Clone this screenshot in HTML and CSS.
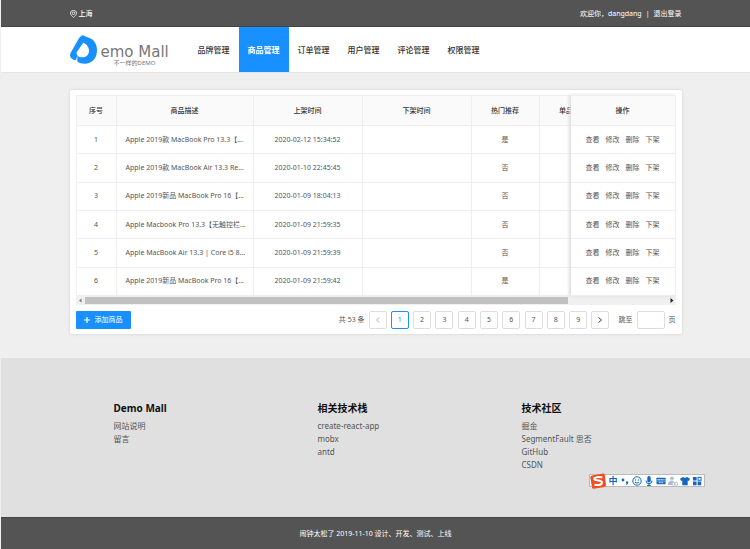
FILE: index.html
```html
<!DOCTYPE html>
<html lang="zh-CN">
<head>
<meta charset="utf-8">
<title>Demo Mall</title>
<link rel="stylesheet" href="styles.css">
</head>
<body>
<header class="topbar">
  <div class="container topbar-inner">
    <span class="city"><svg class="pin" viewBox="0 0 14 16"><path d="M7 15C3.500 11.500 1 9.300 1 6.300a6 5.500 0 0 1 12 0C13 9.300 10.500 11.500 7 15z"/><circle cx="7" cy="6.500" r="2.500"/></svg>上海</span>
    <span class="account">欢迎你，dangdang<span class="divider">|</span><a href="#">退出登录</a></span>
  </div>
</header>
<div class="navbar">
  <div class="container nav-inner">
    <a class="logo" href="#">
      <svg class="logo-mark" viewBox="0 0 81 87"><path fill="#1890ff" fill-rule="evenodd" d="M34 2Q37 0 42 2L56 8C73 13 81 28 81 45C81 70 67 86 43 86Q31 86 22 80V61L18 76C9 74 0 71 0 60Q1 54 5 48L27 10Q30 5 34 2zM40 23L21 50Q18 55 21 59Q24 64 29 66C43 70 57 62 57 47C57 35 49 27 40 23z"/></svg>
      <span class="logo-words"><span class="logo-name">emo Mall</span><span class="logo-sub">不一样的DEMO</span></span>
    </a>
    <nav class="menu">
      <a href="#">品牌管理</a><a class="active" href="#">商品管理</a><a href="#">订单管理</a><a href="#">用户管理</a><a href="#">评论管理</a><a href="#">权限管理</a>
    </nav>
  </div>
</div>
<main class="main">
  <section class="container card">
    <div class="table-wrap">
      <div class="table-scroll">
        <table class="goods">
          <colgroup><col class="c-no"><col class="c-name"><col class="c-time"><col class="c-time"><col class="c-hot"><col class="c-item"></colgroup>
          <thead><tr><th>序号</th><th>商品描述</th><th>上架时间</th><th>下架时间</th><th>热门推荐</th><th>单品推荐</th></tr></thead>
          <tbody>
            <tr><td>1</td><td class="name">Apple 2019款 MacBook Pro 13.3【...</td><td>2020-02-12 15:34:52</td><td></td><td>是</td><td></td></tr>
            <tr><td>2</td><td class="name">Apple 2019款 MacBook Air 13.3 Re...</td><td>2020-01-10 22:45:45</td><td></td><td>否</td><td></td></tr>
            <tr><td>3</td><td class="name">Apple 2019新品 MacBook Pro 16【...</td><td>2020-01-09 18:04:13</td><td></td><td>否</td><td></td></tr>
            <tr><td>4</td><td class="name">Apple Macbook Pro 13.3【无触控栏...</td><td>2020-01-09 21:59:35</td><td></td><td>否</td><td></td></tr>
            <tr><td>5</td><td class="name">Apple MacBook Air 13.3 | Core i5 8...</td><td>2020-01-09 21:59:39</td><td></td><td>否</td><td></td></tr>
            <tr><td>6</td><td class="name">Apple 2019新品 MacBook Pro 16【...</td><td>2020-01-09 21:59:42</td><td></td><td>是</td><td></td></tr>
          </tbody>
        </table>
      </div>
      <table class="goods actions">
        <thead><tr><th>操作</th></tr></thead>
        <tbody>
          <tr><td><a href="#">查看</a><a href="#">修改</a><a href="#">删除</a><a href="#">下架</a></td></tr>
          <tr><td><a href="#">查看</a><a href="#">修改</a><a href="#">删除</a><a href="#">下架</a></td></tr>
          <tr><td><a href="#">查看</a><a href="#">修改</a><a href="#">删除</a><a href="#">下架</a></td></tr>
          <tr><td><a href="#">查看</a><a href="#">修改</a><a href="#">删除</a><a href="#">下架</a></td></tr>
          <tr><td><a href="#">查看</a><a href="#">修改</a><a href="#">删除</a><a href="#">下架</a></td></tr>
          <tr><td><a href="#">查看</a><a href="#">修改</a><a href="#">删除</a><a href="#">下架</a></td></tr>
        </tbody>
      </table>
    </div>
    <div class="scrollbar">
      <svg viewBox="0 0 9 9"><path d="M5.500 2.500v4L3 4.500z" fill="#777"/></svg>
      <div class="track"><div class="thumb"></div></div>
      <svg viewBox="0 0 9 9"><path d="M3.500 2v5L6.500 4.500z" fill="#222"/></svg>
    </div>
    <div class="card-foot">
      <button class="add" type="button"><svg viewBox="0 0 6 6"><path d="M3 0v6M0 3h6" stroke="#fff" stroke-width="1.200"/></svg>添加商品</button>
      <div class="pager">
        <span>共 53 条</span>
        <div class="pages">
          <button type="button" aria-label="上一页"><svg viewBox="0 0 8 8"><path d="M5.500 1.500L2.500 4l3 2.500" stroke="#bbb"/></svg></button>
          <button type="button" class="current">1</button><button type="button">2</button><button type="button">3</button><button type="button">4</button><button type="button">5</button><button type="button">6</button><button type="button">7</button><button type="button">8</button><button type="button">9</button>
          <button type="button" aria-label="下一页"><svg viewBox="0 0 8 8"><path d="M2.500 1.500L5.500 4l-3 2.500" stroke="#444"/></svg></button>
        </div>
        <label class="jump" for="page">跳至</label><input id="page" type="text"><span>页</span>
      </div>
    </div>
  </section>
</main>
<footer>
  <div class="links">
    <div class="container columns">
      <div><h2>Demo Mall</h2><a href="#">网站说明</a><a href="#">留言</a></div>
      <div><h2>相关技术栈</h2><a href="#">create-react-app</a><a href="#">mobx</a><a href="#">antd</a></div>
      <div><h2>技术社区</h2><a href="#">掘金</a><a href="#">SegmentFault 思否</a><a href="#">GitHub</a><a href="#">CSDN</a></div>
    </div>
    <div class="ime">
      <svg class="ime-logo" viewBox="0 0 16 16"><path d="M2 2.500L13 .5Q14.500.3 14.800 2L16 12Q16 13.700 14.500 14L4 15.800Q2.300 16 2 14.500L.3 4.500Q.2 3 2 2.500z" fill="#f04e23"/><path d="M12.300 4.300Q7 3.200 4.300 5.300C3.200 8.300 12.500 6.800 12 9.500C11.500 12.500 7 12.500 4.500 11.500" fill="none" stroke="#fff" stroke-width="2"/></svg>
      <span class="ime-lang">中</span>
      <svg viewBox="0 0 10 10"><circle cx="3" cy="4" r="1.400"/><path d="M6 5.500h2.200v1.800L6.700 9H6l.8-1.500H6z"/></svg>
      <svg viewBox="0 0 10 10"><circle cx="5" cy="5" r="4.200" class="line"/><circle cx="3.500" cy="4" r=".7"/><circle cx="6.500" cy="4" r=".7"/><path class="line" d="M3 6.200Q5 8 7 6.200"/></svg>
      <svg viewBox="0 0 10 10"><rect x="3.300" y="0" width="3.400" height="6.500" rx="1.700"/><path class="line" d="M2 4.500Q2 7.700 5 7.700T8 4.500M5 7.700V10M3.200 9.500h3.600"/></svg>
      <svg viewBox="0 0 10 10"><rect x=".5" y="1.800" width="9" height="6.400" rx=".5"/><path d="M1.500 3.500h7M1.500 5h7M2.800 6.700h4.400" stroke="#fff" stroke-width=".8" stroke-dasharray="1.200 .4"/></svg>
      <svg class="faded" viewBox="0 0 10 10"><circle cx="4" cy="2.300" r="1.800"/><path d="M0 9Q0 4.500 4 4.500Q6 4.500 6 6L4 9z"/><circle cx="5.500" cy="7.800" r="1.500" class="ring"/><circle cx="8.300" cy="7.800" r="1.500" class="ring"/></svg>
      <svg viewBox="0 0 10 10"><path d="M3 1Q5 2.500 7 1L10 2.800L8.800 5L7.700 4.500V9.300H2.300V4.500L1.200 5L0 2.800z"/></svg>
      <svg viewBox="0 0 10 10"><path d="M1 1h3.600v3.600H1zM1 5.600h3.600v3.600H1zM5.600 5.600h3.600v3.600H5.600z"/><rect x="6" y="1.300" width="3" height="3" class="line"/></svg>
    </div>
  </div>
  <div class="copyright">闹钟太松了 2019-11-10 设计、开发、测试、上线</div>
</footer>
</body>
</html>
```
FILE: styles.css
```css
* { box-sizing: border-box; }
body {
  margin: 0;
  padding-left: 1px;
  min-height: 100vh;
  background: #efefef;
  color: #555;
  font: 7px/14px "Noto Sans", "Noto Sans CJK SC", sans-serif;
}
a { color: inherit; text-decoration: none; }
button, input { font: inherit; color: inherit; }
.container { max-width: 612px; margin: 0 auto; }

.topbar { background: #545454; border-bottom: 1px solid #444; color: #fff; font-weight: 500; }
.topbar-inner { display: flex; justify-content: space-between; align-items: center; height: 26px; padding-top: 1px; }
.city { display: flex; align-items: center; gap: 2px; }
.account { font-weight: 400; }
.pin { width: 7px; height: 8px; fill: none; stroke: #ddd; stroke-width: 2; }
.divider { margin: 0 4px; }

.navbar { background: #fff; border-bottom: 1px solid #e4e4e4; }
.nav-inner { display: flex; height: 45px; }
.logo { display: flex; align-items: flex-start; width: 119px; padding-top: 8px; gap: 4px; color: #777; }
.logo-mark { width: 27px; height: 29px; }
.logo-words { display: flex; flex-direction: column; padding-top: 9px; }
.logo-name { font: 400 15px/16px "DejaVu Sans", sans-serif; white-space: nowrap; }
.logo-sub { padding-left: 13px; font-size: 6px; line-height: 6px; }
.menu { display: flex; }
.menu a { width: 50px; text-align: center; font-size: 8px; line-height: 45px; font-weight: 500; color: #333; }
.menu .active { background: #1890ff; color: #fff; font-weight: 700; }

.main { padding: 17px 0 24px; }
.card { background: #fff; border-radius: 2px; padding: 5px 6px; box-shadow: 0 0 3px #ccc; }
.table-wrap { position: relative; }
.table-scroll { overflow: hidden; margin-right: 105px; border-left: 1px solid #eee; }
.goods { table-layout: fixed; width: 531px; height: 201px; border-collapse: separate; border-spacing: 0; text-align: center; }
.goods th, .goods td { padding: 0; border-right: 1px solid #eee; border-bottom: 1px solid #eee; }
.goods th { height: 31px; background: #fafafa; border-top: 1px solid #eee; color: #333; font-weight: 500; white-space: nowrap; }
.goods .name { padding-left: 9px; text-align: left; white-space: nowrap; }
.c-no { width: 40px; }
.c-name { width: 137px; }
.c-time { width: 109px; }
.c-hot { width: 68px; }
.c-item { width: 68px; }
.actions { position: absolute; top: 0; right: 0; width: 105px; background: #fff; box-shadow: -2px 0 3px #ddd; }
.actions td a { margin: 0 3px; }

.scrollbar { display: flex; align-items: center; height: 9px; background: #f0f0f0; }
.scrollbar svg { width: 9px; height: 9px; }
.track { flex: 1; }
.thumb { width: 83%; height: 7px; background: #c1c1c1; }

.card-foot { display: flex; justify-content: space-between; align-items: center; padding-top: 6px; }
.add { display: flex; align-items: center; gap: 5px; height: 18px; padding: 0 8px; border: 0; border-radius: 1px; background: #1890ff; color: #fff; }
.add svg { width: 6px; height: 6px; }
.pager { display: flex; align-items: center; gap: 4px; }
.pages { display: flex; justify-content: space-between; width: 241px; }
.pages button { display: flex; align-items: center; justify-content: center; width: 18px; height: 18px; padding: 0; border: 1px solid #ddd; border-radius: 2px; background: #fff; }
.pages .current { border-color: #1890ff; color: #1890ff; }
.pages svg { width: 8px; height: 8px; fill: none; }
.jump { margin-left: 5px; }
.pager input { width: 28px; height: 18px; padding: 0 3px; border: 1px solid #ddd; border-radius: 2px; background: #fff; }

.links { position: relative; height: 159px; padding-top: 43px; background: #e0e0e0; }
.columns { display: grid; grid-template-columns: repeat(3, 1fr); }
.columns div { display: flex; flex-direction: column; align-items: flex-start; padding-left: 44px; }
.columns h2 { margin: 0 0 4px; color: #111; font-size: 10px; line-height: 14px; }
.columns a { font-size: 8px; line-height: 13px; }
.ime { position: absolute; right: 45px; bottom: 30px; display: flex; align-items: center; gap: 2px; height: 13px; padding-right: 2px; border: 1px solid #bbb; background: #fff; }
.ime svg { width: 10px; height: 10px; fill: #1267c0; }
.ime .line { fill: none; stroke: #1267c0; stroke-width: 1; }
.ime .faded { fill: #a9bdd8; }
.ime .ring { fill: #fff; stroke: #a9bdd8; }
.ime .ime-logo { width: 16px; height: 16px; }
.ime-lang { width: 10px; color: #1267c0; font-size: 9px; font-weight: 700; text-align: center; }
.copyright { background: #545454; border-top: 1px solid #444; color: #fff; line-height: 31px; text-align: center; }
```
